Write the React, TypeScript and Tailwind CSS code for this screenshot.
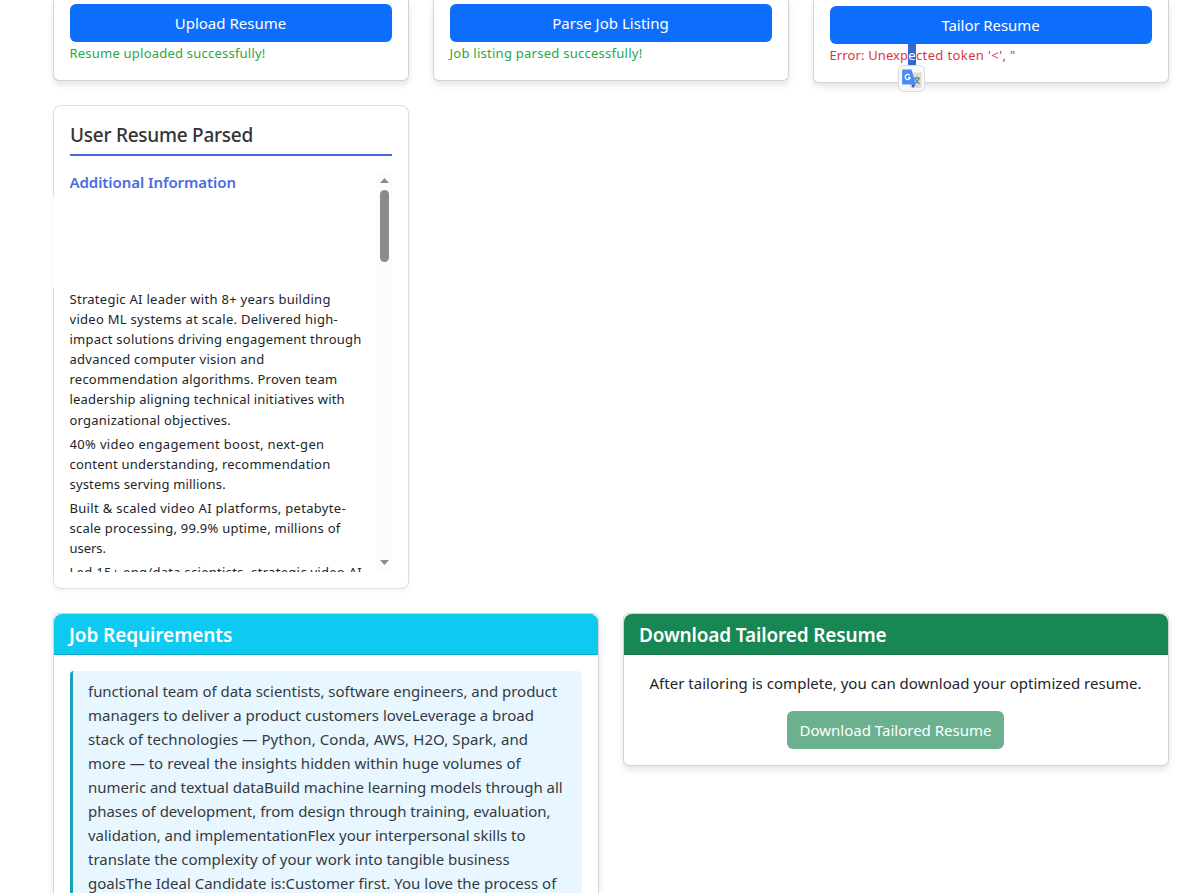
import React from "react";

type Line = { text: string; cls: string };

const resumeParagraphs: Line[][] = [
  [
    { text: "Strategic AI leader with 8+ years building", cls: "tracking-[0.275px]" },
    { text: "video ML systems at scale. Delivered high-", cls: "tracking-[0.275px]" },
    { text: "impact solutions driving engagement through", cls: "tracking-[0.245px]" },
    { text: "advanced computer vision and", cls: "tracking-[0.27px]" },
    { text: "recommendation algorithms. Proven team", cls: "tracking-[0.22px]" },
    { text: "leadership aligning technical initiatives with", cls: "tracking-[0.195px]" },
    { text: "organizational objectives.", cls: "tracking-[0.225px]" },
  ],
  [
    { text: "40% video engagement boost, next-gen", cls: "tracking-[0.335px]" },
    { text: "content understanding, recommendation", cls: "tracking-[0.215px]" },
    { text: "systems serving millions.", cls: "tracking-[0.16px]" },
  ],
  [
    { text: "Built & scaled video AI platforms, petabyte-", cls: "tracking-[0.31px]" },
    { text: "scale processing, 99.9% uptime, millions of", cls: "tracking-[0.235px]" },
    { text: "users.", cls: "tracking-[-0.05px]" },
  ],
  [{ text: "Led 15+ eng/data scientists, strategic video AI", cls: "tracking-[0.29px]" }],
];

const jobLines: Line[] = [
  { text: "functional team of data scientists, software engineers, and product", cls: "tracking-[-0.03px]" },
  { text: "managers to deliver a product customers loveLeverage a broad", cls: "tracking-[0.01px]" },
  { text: "stack of technologies — Python, Conda, AWS, H2O, Spark, and", cls: "tracking-[0.082px]" },
  { text: "more — to reveal the insights hidden within huge volumes of", cls: "tracking-[0.055px]" },
  { text: "numeric and textual dataBuild machine learning models through all", cls: "tracking-[-0.034px]" },
  { text: "phases of development, from design through training, evaluation,", cls: "tracking-[-0.015px]" },
  { text: "validation, and implementationFlex your interpersonal skills to", cls: "tracking-[-0.03px]" },
  { text: "translate the complexity of your work into tangible business", cls: "tracking-[0.001px]" },
  { text: "goalsThe Ideal Candidate is:Customer first. You love the process of", cls: "tracking-[0.002px]" },
];

const cardShadow = "shadow-[0_4px_6px_rgba(0,0,0,0.1)]";

function ActionCard({ label, pad, children }: { label: React.ReactNode; pad: string; children: React.ReactNode }) {
  return (
    <section className={`w-[356px] rounded-b-md border border-t-0 border-[#d3d3d3] bg-white px-4 pb-[17px] ${pad} ${cardShadow}`}>
      <button className="block h-[38px] w-full rounded-md bg-[#0d6efd] pr-px text-[15px] leading-6 text-white">{label}</button>
      {children}
    </section>
  );
}

function TranslateIcon() {
  return (
    <svg width="20" height="20" viewBox="0 0 20 20">
      <rect x="8" y="3.500" width="11.500" height="15.500" rx="0.8" fill="#dcdcdc" />
      <path d="M11.500 9.200h6.500M15 7.500v1.700M17 9.200c-.5 2.600-2 4.200-4.500 5.600M13.200 10c.8 2 2.300 3.400 4.500 4.700" stroke="#6f7f86" strokeWidth="1.200" fill="none" />
      <path d="M9.300 15.500h4.200l-2.500 3.500z" fill="#3547b5" />
      <path d="M1 0.500h8.500l4.300 15H1a.9.9 0 0 1-.9-.9V1.400A.9.9 0 0 1 1 .5z" fill="#4b8af4" />
      <path d="M7.800 6.500A2.600 2.600 0 1 0 8.200 8.600H5.900" stroke="#fff" strokeWidth="1.200" fill="none" />
    </svg>
  );
}

function Scrollbar() {
  return (
    <div className="flex w-[15px] flex-col items-center bg-[#fcfcfc] pt-[6px] pb-[7px]">
      <svg width="9" height="5" viewBox="0 0 9 5" className="shrink-0">
        <path d="M0 5 4.500 0 9 5z" fill="#8b8b8b" />
      </svg>
      <div className="mt-[7px] h-[72px] w-[9px] rounded-full bg-[#8b8b8b]" />
      <svg width="9" height="5" viewBox="0 0 9 5" className="mt-auto shrink-0">
        <path d="M0 0 4.500 5 9 0z" fill="#8b8b8b" />
      </svg>
    </div>
  );
}

export default function App() {
  return (
    <main className="h-[893px] w-[1184px] overflow-hidden bg-white pl-[53px] font-['Noto_Sans',sans-serif] text-[#212529]">
      <div className="flex h-[105px] items-start gap-6">
        <ActionCard pad="pt-1" label={<span className="tracking-[0.02px]">Upload Resume</span>}>
          <p className="-ml-[0.5px] mt-px h-5 whitespace-nowrap text-[13px] leading-5 tracking-[0.22px] text-[#28a745]">Resume uploaded successfully!</p>
        </ActionCard>
        <ActionCard pad="pt-1" label={<span className="tracking-[0.02px]">Parse Job Listing</span>}>
          <p className="-ml-[0.5px] mt-px h-5 whitespace-nowrap text-[13px] leading-5 tracking-[0.26px] text-[#28a745]">Job listing parsed successfully!</p>
        </ActionCard>
        <ActionCard pad="pt-1.5" label={<span className="tracking-[-0.08px]">Tailor Resume</span>}>
          <div className="relative mt-px h-5">
            <p className="-ml-[0.5px] whitespace-nowrap text-[13px] leading-5 tracking-[0.38px] text-[#dc3545]">
              <span className="tracking-[0.12px]">Error: Unexp</span><span className="bg-[#3367d1] py-[2px] text-white">e</span>cted token '&lt;', "
            </p>
            <div className="absolute left-[68px] top-5 flex h-[27px] w-[27px] items-center justify-center rounded-[5px] border border-[#dcdcdc] bg-[#f8f8f8]">
              <TranslateIcon />
            </div>
          </div>
        </ActionCard>
      </div>

      <section className="relative h-[484px] w-[356px] rounded-lg border border-[#dedede] bg-white px-4 pt-4 shadow-[0_2px_4px_rgba(0,0,0,0.05)]">
        <h2 className="h-[34px] border-b-2 border-[#4a6bdf] text-[19px] font-medium leading-[26px] tracking-[-0.25px] text-[#333]">User Resume Parsed</h2>
        <div className="mt-4 flex h-[400px] overflow-hidden">
          <div className="-ml-[0.5px] w-[307.500px] shrink-0 whitespace-nowrap">
            <h3 className="h-[116.700px] text-[15px] font-semibold leading-5 tracking-[-0.07px] text-[#4a6bdf]">Additional Information</h3>
            <div className="flex flex-col gap-[3.900px] text-[13px] leading-[20.160px]">
              {resumeParagraphs.map((lines, i) => (
                <div key={i}>
                  {lines.map((l) => (
                    <p key={l.text} className={l.cls}>{l.text}</p>
                  ))}
                </div>
              ))}
            </div>
          </div>
          <Scrollbar />
        </div>
        <div className="absolute -left-px top-[91px] h-[91px] w-[3px] bg-white" />
      </section>

      <div className="mt-6 flex items-start gap-6">
        <section className={`h-[400px] w-[546px] rounded-md border border-[#d3d3d3] bg-white ${cardShadow}`}>
          <h2 className="h-[41px] rounded-t-[8px] border-b border-[#0ba9c6] bg-[#0dcaf0] px-[15px] pt-2 text-[19px] font-semibold leading-[26px] tracking-[-0.09px] text-white">Job Requirements</h2>
          <div className="p-4">
            <div className="h-[400px] whitespace-nowrap rounded border-l-[3px] border-[#17a2b8] bg-[#e8f7ff] px-[15px] py-2 text-[15px] leading-6 text-[#343a40]">
              {jobLines.map((l) => (
                <p key={l.text} className={l.cls}>{l.text}</p>
              ))}
            </div>
          </div>
        </section>
        <section className={`h-[153px] w-[546px] rounded-md border border-[#d3d3d3] bg-white ${cardShadow}`}>
          <h2 className="h-[41px] rounded-t-[8px] border-b border-[#157347] bg-[#198754] px-[15px] pt-2 text-[19px] font-semibold leading-[26px] tracking-[-0.15px] text-white">Download Tailored Resume</h2>
          <div className="flex flex-col items-center gap-4 py-4 pl-4 pr-[17px] text-[15px] leading-6">
            <p className="whitespace-nowrap tracking-[0.03px]">After tailoring is complete, you can download your optimized resume.</p>
            <button className="h-[38px] w-[217px] whitespace-nowrap rounded-md bg-[#6bb190] tracking-[0.01px] text-white">Download Tailored Resume</button>
          </div>
        </section>
      </div>
    </main>
  );
}
